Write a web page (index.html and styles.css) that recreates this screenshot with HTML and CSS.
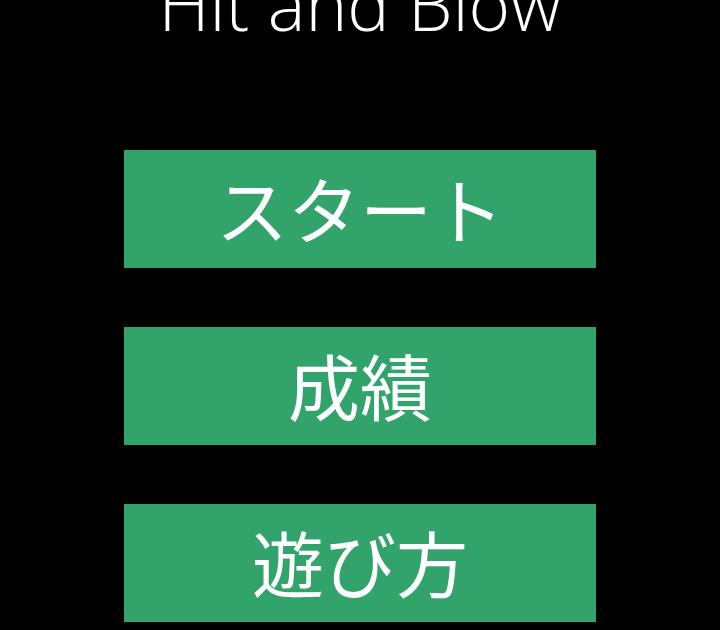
FILE: index.html
```html
<!DOCTYPE html>
<html lang="ja">
<head>
    <meta charset="UTF-8">
    <meta name="viewport" content="width=device-width, initial-scale=1.0">
    <title>Hit and Blow</title>
    <link rel="stylesheet" href="styles.css">
</head>
<body>

    <div class="screen">
        <h1 class="title">Hit and Blow</h1>

        <div class="menu">
            <button type="button" class="menu-btn">スタート</button>
            <button type="button" class="menu-btn">成績</button>
            <button type="button" class="menu-btn">遊び方</button>
        </div>
    </div>

</body>
</html>
```

FILE: styles.css
```css
/* General styles */
body {
    margin: 0;
    padding: 0;
    background-color: #000;
    overflow: hidden;
    font-family: "Open Sans", "Noto Sans CJK JP", sans-serif;
}

.screen {
    width: 720px;
    height: 630px;
    display: flex;
    flex-direction: column;
    align-items: center;
}

.title {
    margin: -30px 0 0;
    height: 68px;
    font-size: 71px;
    line-height: 68px;
    font-weight: 300;
    color: #fff;
    text-align: center;
}

.menu {
    margin-top: 112px;
    display: flex;
    flex-direction: column;
    gap: 59px;
}

.menu-btn {
    width: 472px;
    height: 118px;
    padding: 0 0 5px;
    border: none;
    background-color: #32a36b;
    color: #fff;
    font-family: "Noto Sans CJK JP", sans-serif;
    font-size: 72px;
    font-weight: 400;
    line-height: 1;
    cursor: pointer;
}
```
